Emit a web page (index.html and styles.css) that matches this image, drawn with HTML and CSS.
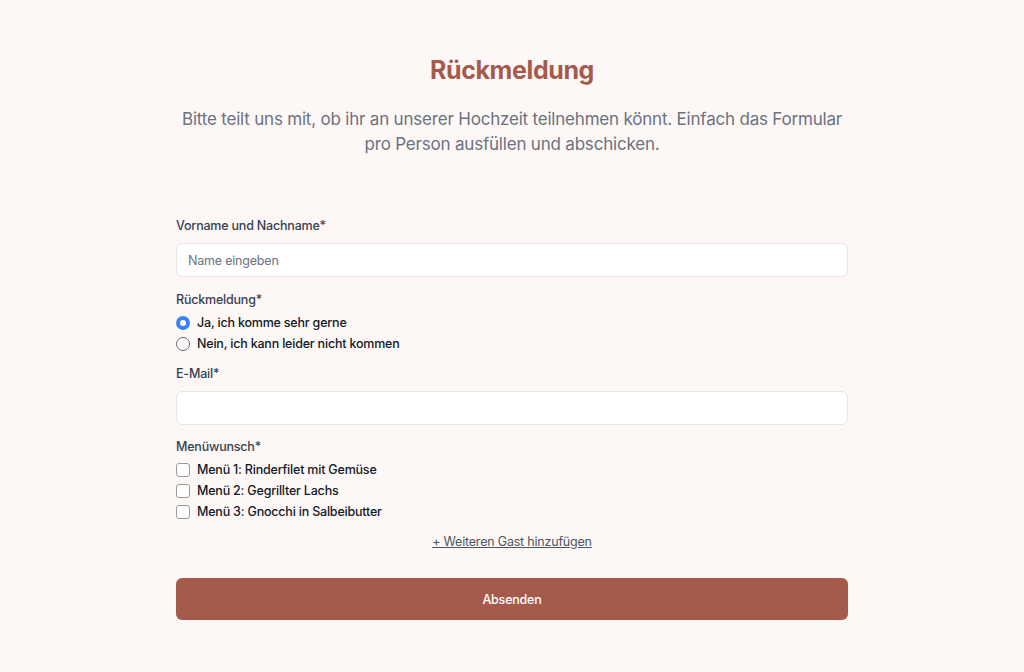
FILE: index.html
```html
<!DOCTYPE html>
<html lang="de">
<head>
<meta charset="utf-8">
<title>Rückmeldung</title>
<link rel="stylesheet" href="styles.css">
</head>
<body>
<main class="page">
  <h1 class="title">Rückmeldung</h1>
  <p class="intro">Bitte teilt uns mit, ob ihr an unserer Hochzeit teilnehmen könnt. Einfach das Formular pro Person ausfüllen und abschicken.</p>
  <form class="form">
    <div class="field">
      <label class="label" for="name">Vorname und Nachname*</label>
      <input class="input" id="name" type="text" placeholder="Name eingeben">
    </div>
    <div class="field field-options">
      <span class="label">Rückmeldung*</span>
      <div class="options">
        <label class="option"><input class="radio" type="radio" name="rsvp" checked><span>Ja, ich komme sehr gerne</span></label>
        <label class="option"><input class="radio" type="radio" name="rsvp"><span>Nein, ich kann leider nicht kommen</span></label>
      </div>
    </div>
    <div class="field field-mail">
      <label class="label" for="mail">E-Mail*</label>
      <input class="input" id="mail" type="email">
    </div>
    <div class="field field-options">
      <span class="label">Menüwunsch*</span>
      <div class="options">
        <label class="option"><input class="check" type="checkbox"><span>Menü 1: Rinderfilet mit Gemüse</span></label>
        <label class="option"><input class="check" type="checkbox"><span>Menü 2: Gegrillter Lachs</span></label>
        <label class="option"><input class="check" type="checkbox"><span>Menü 3: Gnocchi in Salbeibutter</span></label>
      </div>
    </div>
    <div class="add-row"><a class="add-link" href="#">+ Weiteren Gast hinzufügen</a></div>
    <button class="submit" type="button">Absenden</button>
  </form>
</main>
</body>
</html>
```
FILE: styles.css
```css
* { box-sizing: border-box; }
body {
  margin: 0;
  background: #fdf8f6;
  font-family: Inter, "Noto Sans", "Liberation Sans", sans-serif;
  color: #1f2937;
}
.page {
  max-width: 672px;
  margin: 0 auto;
  padding-top: 54px;
}
.title {
  margin: 0;
  text-align: center;
  font-size: 25px;
  line-height: 32px;
  font-weight: 700;
  letter-spacing: -0.4px;
  color: #a65a4c;
}
.intro {
  margin: 21px 0 0;
  text-align: center;
  font-size: 17px;
  line-height: 25px;
  letter-spacing: -0.2px;
  color: #6b7280;
}
.form {
  margin-top: 59px;
  display: flex;
  flex-direction: column;
}
.field {
  display: flex;
  flex-direction: column;
  margin-bottom: 13px;
}
.field-options { margin-bottom: 10px; }
.field-mail { margin-bottom: 12px; }
.label {
  font-size: 12.5px;
  line-height: 20px;
  font-weight: 500;
  letter-spacing: -0.2px;
  color: #374151;
}
.input {
  margin-top: 7px;
  height: 34px;
  width: 100%;
  border: 1px solid #e8e6e6;
  border-radius: 6px;
  background: #fff;
  padding: 0 11px;
  font: inherit;
  font-size: 12.5px;
  letter-spacing: -0.2px;
  color: #111827;
}
.input::placeholder { color: #6b7280; }
.options {
  margin-top: 2px;
  display: flex;
  flex-direction: column;
}
.option {
  display: flex;
  align-items: center;
  gap: 7px;
  height: 21px;
  font-size: 12.5px;
  font-weight: 500;
  letter-spacing: -0.2px;
  color: #111827;
}
.radio, .check {
  appearance: none;
  -webkit-appearance: none;
  margin: 0;
  width: 14px;
  height: 14px;
  flex: none;
  background: #fff;
  border: 1px solid #6b6b6b;
}
.radio { border-radius: 50%; }
.radio:checked {
  border: 4px solid #3b82f6;
  background: #fff;
}
.check {
  border-radius: 3px;
  border-color: #9a9a9a;
}
.add-row {
  text-align: center;
  margin-top: -2px;
}
.add-link {
  font-size: 12.5px;
  line-height: 20px;
  letter-spacing: -0.2px;
  color: #4b5563;
  text-decoration: underline;
}
.submit {
  margin-top: 26px;
  height: 42px;
  width: 100%;
  border: none;
  border-radius: 6px;
  background: #a65a4c;
  color: #fff;
  font: inherit;
  font-size: 12.5px;
  font-weight: 500;
  letter-spacing: -0.2px;
}
```
